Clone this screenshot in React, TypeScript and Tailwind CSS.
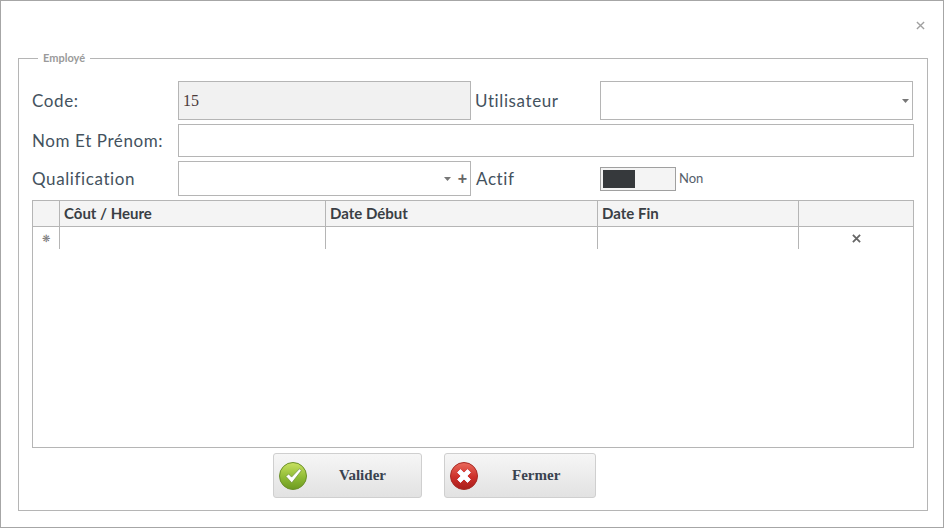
const gothic = "font-['Lato','Liberation_Sans',sans-serif]"

function Caret() {
    return (
        <svg width="7" height="4" viewBox="0 0 7 4" className="shrink-0">
            <path d="M0 0h7L3.5 4z" fill="#777" />
        </svg>
    )
}

function CloseMark({ size, color, width }: { size: number; color: string; width: number }) {
    return (
        <svg width={size} height={size} viewBox="0 0 10 10">
            <path d="M1 1l8 8M9 1l-8 8" stroke={color} strokeWidth={width} fill="none" />
        </svg>
    )
}

function CheckIcon() {
    return (
        <svg width="28" height="28" viewBox="0 0 28 28">
            <defs>
                <linearGradient id="okFill" x1="0" y1="0" x2="0" y2="1">
                    <stop offset="0" stopColor="#c9e261" />
                    <stop offset="0.55" stopColor="#8fbb35" />
                    <stop offset="1" stopColor="#6d9a20" />
                </linearGradient>
            </defs>
            <circle cx="14" cy="14" r="13.5" fill="url(#okFill)" stroke="#6b8f2a" strokeWidth="1" />
            <path d="M7 14.5l2.6-2.6 3 3.2L20.4 6.8l2 1.8-9.6 12.2z" fill="#fff" stroke="#6f8f3a" strokeWidth="0.7" />
        </svg>
    )
}

function CrossIcon() {
    return (
        <svg width="28" height="28" viewBox="0 0 28 28">
            <defs>
                <linearGradient id="koFill" x1="0" y1="0" x2="0" y2="1">
                    <stop offset="0" stopColor="#ea6a5c" />
                    <stop offset="0.55" stopColor="#cc2f2a" />
                    <stop offset="1" stopColor="#a81d1c" />
                </linearGradient>
            </defs>
            <circle cx="14" cy="14" r="13.5" fill="url(#koFill)" stroke="#a52a25" strokeWidth="1" />
            <path d="M7.5 10.5l3-3L14 11l3.500-3.500 3 3L17 14l3.500 3.500-3 3L14 17l-3.500 3.500-3-3L11 14z" fill="#fff" stroke="#eef" strokeWidth="1" strokeLinejoin="round" />
        </svg>
    )
}

function Label({ className, children }: { className: string; children: React.ReactNode }) {
    return <div className={`text-[17px] text-[#44525e] tracking-[0.6px] whitespace-nowrap flex items-center ${className}`}>{children}</div>
}

export default function App() {
    return (
        <div className={`w-[944px] h-[528px] border border-[#a6a6a6] bg-white pt-[50px] pl-[17px] ${gothic}`}>
            <fieldset className="w-[910px] h-[460px] border border-[#b5b5b5] pl-[13px]">
                <legend className="ml-[6px] px-[5px] text-[11px] leading-[14px] font-bold text-[#9a9a9a]">Employé</legend>

                <div className="pt-[16px] w-[882px]">
                    {/* Code / Utilisateur */}
                    <div className="flex h-[39px]">
                        <Label className="w-[146px]">Code:</Label>
                        <div className="w-[293px] border border-[#b5b5b5] bg-[#f1f1f1] flex items-center pl-[4px] text-[16px] text-[#4a3a3a] font-['Liberation_Serif',serif]">15</div>
                        <Label className="w-[129px] pl-[4px]">Utilisateur</Label>
                        <div className="w-[313px] border border-[#b5b5b5] flex items-center justify-end pr-[3px]">
                            <Caret />
                        </div>
                    </div>

                    {/* Nom */}
                    <div className="flex h-[33px] mt-[4px]">
                        <Label className="w-[146px]">Nom Et Prénom:</Label>
                        <div className="w-[736px] border border-[#b5b5b5]"></div>
                    </div>

                    {/* Qualification / Actif */}
                    <div className="flex h-[35px] mt-[4px]">
                        <Label className="w-[146px]">Qualification</Label>
                        <div className="w-[293px] border border-[#b5b5b5] flex items-center justify-end gap-[7px] pr-[3px]">
                            <Caret />
                            <span className="text-[16px] leading-none font-bold text-[#666] font-['Liberation_Sans',sans-serif]">+</span>
                        </div>
                        <Label className="w-[129px] pl-[5px]">Actif</Label>
                        <div className="flex items-center gap-[3px]">
                            <div className="w-[76px] h-[24px] border border-[#a0a0a0] bg-[#f4f4f4] p-[2px]">
                                <div className="w-[32px] h-full bg-[#36393c]"></div>
                            </div>
                            <span className="text-[13px] text-[#55606a]">Non</span>
                        </div>
                    </div>

                    {/* Table */}
                    <div className="mt-[4px] h-[248px] border border-[#b5b5b5]">
                        <div className="grid grid-cols-[27px_266px_272px_201px_1fr] h-[26px] bg-[#f4f4f4] border-b border-[#b5b5b5] text-[15px] font-bold text-[#3a3f45] leading-[24px]">
                            <div className="border-r border-[#b5b5b5]"></div>
                            <div className="border-r border-[#b5b5b5] pl-[4px]">Côut / Heure</div>
                            <div className="border-r border-[#b5b5b5] pl-[4px]">Date Début</div>
                            <div className="border-r border-[#b5b5b5] pl-[4px]">Date Fin</div>
                            <div></div>
                        </div>
                        <div className="grid grid-cols-[27px_266px_272px_201px_1fr] h-[22px]">
                            <div className="border-r border-[#b5b5b5] flex items-center justify-center text-[10px] text-[#777]">❋</div>
                            <div className="border-r border-[#b5b5b5]"></div>
                            <div className="border-r border-[#b5b5b5]"></div>
                            <div className="border-r border-[#b5b5b5]"></div>
                            <div className="flex items-center justify-center">
                                <CloseMark size={9} color="#666" width={2} />
                            </div>
                        </div>
                    </div>

                    {/* Buttons */}
                    <div className="flex mt-[5px] pl-[241px] gap-[22px] font-['Liberation_Serif',serif] text-[15px] font-bold text-[#39424f]">
                        <button className="w-[149px] h-[45px] rounded-[3px] border border-[#cfcfcf] bg-gradient-to-b from-[#f6f6f6] to-[#e2e2e2] flex items-center pl-[5px]">
                            <CheckIcon />
                            <span className="ml-[32px]">Valider</span>
                        </button>
                        <button className="w-[152px] h-[45px] rounded-[3px] border border-[#cfcfcf] bg-gradient-to-b from-[#f6f6f6] to-[#e2e2e2] flex items-center pl-[5px]">
                            <CrossIcon />
                            <span className="ml-[34px]">Fermer</span>
                        </button>
                    </div>
                </div>
            </fieldset>
            <div className="absolute left-[916px] top-[21px]">
                <CloseMark size={9} color="#a0a0a0" width={1.5} />
            </div>
        </div>
    )
}
